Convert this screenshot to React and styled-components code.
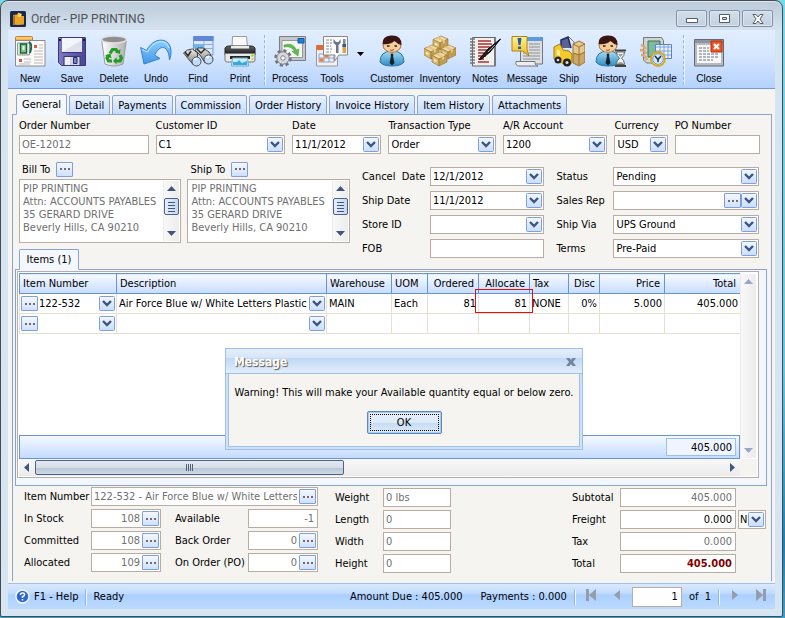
import { useId } from "react";
import styled, { createGlobalStyle, css } from "styled-components";

const GlobalStyle = createGlobalStyle`
  * {
    box-sizing: border-box;
  }
  body {
    margin: 0;
    background: linear-gradient(#74dbe8, #5ccbe0 60%, #1583b5 88%, #3a9fc4);
  }
  body, button, input, select, textarea {
    font-family: "DejaVu Sans Condensed", "Noto Sans", sans-serif;
    font-size: 11px;
    line-height: 13px;
    color: #000;
  }
  button {
    padding: 0;
    cursor: pointer;
  }
`;

const chevron = `url("data:image/svg+xml,%3Csvg xmlns='http://www.w3.org/2000/svg' width='16' height='15'%3E%3ClinearGradient id='g' x2='0' y2='1'%3E%3Cstop stop-color='%23f4f8ff'/%3E%3Cstop offset='1' stop-color='%23c8ddff'/%3E%3C/linearGradient%3E%3Crect x='.5' y='.5' width='15' height='14' rx='1' fill='url(%23g)' stroke='%237f9edb'/%3E%3Cpath d='M4 5l4 4 4-4' fill='none' stroke='%233d5483' stroke-width='2.4'/%3E%3C/svg%3E")`;

/* ---------- window ---------- */

const Window = styled.main`
  position: relative;
  min-height: calc(100vh - 1px);
  margin: 0 2px 1px 0;
  padding: 0 7px 7px;
  display: flex;
  flex-direction: column;
  border: 1px solid #464b55;
  border-radius: 8px 8px 2px 2px;
  background: linear-gradient(#bccad9, #d6e3f0 30px, #d7e4f2);
  box-shadow: inset 0 1px #dfe9f3;
`;

const TitleBar = styled.header`
  display: flex;
  align-items: center;
  gap: 5px;
  height: 29px;
  padding: 6px 2px 0;
  h1 {
    flex: 1;
    margin: 0;
    font: 12px/16px Roboto, "Open Sans", sans-serif;
    color: #4f5359;
  }
`;

const Caption = styled.div`
  display: flex;
  gap: 2px;
`;

const CaptionButton = styled.button`
  width: 31px;
  height: 17px;
  display: grid;
  place-items: center;
  border: 1px solid #8392a6;
  border-radius: 2px;
  background: linear-gradient(#d2deeb, #c2d0df);
  box-shadow: inset 0 0 0 1px #dde7f1;
`;

const Client = styled.div`
  flex: 1;
  display: flex;
  flex-direction: column;
  background: #f5f4f0;
`;

/* ---------- toolbar ---------- */

const Toolbar = styled.nav`
  display: flex;
  height: 59px;
  padding: 5px 1px 0;
  border-bottom: 1px solid #6b9be2;
  background: linear-gradient(#e2eeff, #d5e6ff 45%, #b4d2fd);
`;

const Tool = styled.button`
  width: ${({ $wide }) => ($wide ? 48 : 42)}px;
  flex: none;
  display: flex;
  flex-direction: column;
  align-items: center;
  gap: 5px;
  border: 0;
  background: none;
  font: 10px/13px "Liberation Sans", Arial, sans-serif;
  white-space: nowrap;
`;

const ToolArrow = styled.button`
  width: 15px;
  height: 34px;
  border: 0;
  background: none;
`;

const ToolDivider = styled.span`
  height: 50px;
  margin: 0 3px;
  border-left: 1px dashed #8fb5ee;
  border-right: 1px solid #eef5ff;
`;

/* ---------- tabs ---------- */

const Tabs = styled.div`
  display: flex;
  align-items: flex-end;
  gap: 2px;
  margin: 5px 0 -1px 8px;
  position: relative;
`;

const Tab = styled.button`
  height: ${({ $active }) => ($active ? 21 : 20)}px;
  padding: 0 5px;
  border: 1px solid #8ba3d0;
  border-bottom-color: ${({ $active }) => ($active ? "#f2f6fd" : "#8ba3d0")};
  border-radius: 2px 2px 0 0;
  background: ${({ $active }) =>
    $active ? "#f4f7fd" : "linear-gradient(#eaf2ff, #c5dcff)"};
  white-space: nowrap;
`;

const Panel = styled.section`
  flex: 1;
  display: flex;
  flex-direction: column;
  margin: 0 3px 2px 4px;
  padding: 0 4px 8px 2px;
  border: 1px solid #8ba3d0;
  border-bottom: 0;
  background: #f5f4f0;
`;

/* ---------- fields ---------- */

const FieldBox = styled.span`
  display: flex;
  align-items: center;
  min-width: 0;
  height: 19px;
  padding-right: 1px;
  border: 1px solid #b9ada3;
  background: #fff;
`;

const control = css`
  flex: 1;
  width: 100%;
  min-width: 0;
  height: 17px;
  border: 0;
  padding: 0 2px;
  outline: 0;
  background: transparent;
`;

const Input = styled.input`
  ${control}
  text-align: ${({ $right }) => ($right ? "right" : "left")};
  color: ${({ $muted }) => ($muted ? "#6f6f6f" : "#000")};
  ${({ $grand }) => $grand && "color: #800000; font-weight: bold;"}
`;

const Select = styled.select`
  ${control}
  appearance: none;
  padding: 0 17px 0 2px;
  background: ${chevron} no-repeat right center;
`;

const Dots = styled.button`
  flex: none;
  width: 17px;
  height: 15px;
  display: grid;
  place-items: center;
  border: 1px solid #7f9edb;
  border-radius: 1px;
  background: linear-gradient(#f4f8ff, #cfe1ff);
`;

const TopGrid = styled.div`
  display: grid;
  grid-template-columns: 129fr 129fr 89fr 107fr 104fr 53fr 85fr;
  gap: 7px;
  padding: 4px 7px 0 4px;
  label {
    display: block;
    height: 16px;
    white-space: nowrap;
  }
`;

const Middle = styled.div`
  display: flex;
  gap: 12px;
  margin-top: 7px;
  padding: 0 8px 0 4px;
`;

const Addresses = styled.div`
  flex: 330;
  display: grid;
  grid-template-columns: 1fr 1fr;
  column-gap: 6px;
  row-gap: 6px;
`;

const AddressHead = styled.div`
  display: flex;
  align-items: center;
  gap: 6px;
  height: 16px;
  margin-bottom: 2px;
  padding-left: 3px;
`;

const AddressBox = styled.div`
  display: flex;
  height: 64px;
  border: 1px solid #b9ada3;
  background: #fff;
  textarea {
    flex: 1;
    min-width: 0;
    padding: 2px 3px;
    border: 0;
    outline: 0;
    resize: none;
    overflow: hidden;
    white-space: pre;
    background: none;
    color: #6f6f6f;
  }
`;

const Scroll = styled.div`
  width: 17px;
  display: flex;
  flex-direction: column;
  align-items: center;
  justify-content: space-between;
  padding: 5px 0;
  border: 1px solid #fff;
  border-left-color: #ececec;
  background: linear-gradient(90deg, #f8f8f8, #ececec);
`;

const Thumb = styled.span`
  width: 15px;
  height: 17px;
  margin: 7px 0 auto;
  border: 1px solid #4b628f;
  border-radius: 2px;
  background: repeating-linear-gradient(#40567f 0 1px, transparent 1px 3px)
      center / 7px 10px no-repeat,
    linear-gradient(90deg, #e6eef8, #c7d9ee);
`;

const Pairs = styled.div`
  flex: ${({ $grow }) => $grow};
  display: grid;
  grid-template-columns: ${({ $label }) => $label}px 1fr;
  align-content: start;
  align-items: center;
  row-gap: 5px;
  padding-top: 6px;
  white-space: pre;
`;

/* ---------- items ---------- */

const ItemsTab = styled(Tab)`
  justify-self: start;
  width: 60px;
  position: relative;
  margin-bottom: -1px;
`;

const ItemsPanel = styled.div`
  flex: 1;
  display: flex;
  padding: 1px 7px 7px 1px;
  border: 1px solid #8ba3d0;
  background: #f2f6fd;
`;

const ItemsFrame = styled.div`
  flex: 1;
  min-width: 0;
  display: grid;
  grid-template: 1fr 17px / 1fr 17px;
  padding: 1px;
  border: 1px solid #b9ada3;
  background: #fff;
`;

const ItemsBody = styled.div`
  display: flex;
  flex-direction: column;
  min-width: 0;
`;

const Table = styled.table`
  width: 100%;
  table-layout: fixed;
  border-collapse: collapse;
  th,
  td {
    height: 20px;
    padding: 0 2px;
    border: 1px solid #e4e0d2;
    text-align: left;
    white-space: nowrap;
  }
  th {
    padding: 0 4px 0 3px;
    border-color: #6a93d4;
    font-weight: normal;
    background: linear-gradient(#f8fbff, #dfebff 50%, #c6dcff);
  }
  td {
    position: relative;
  }
  td:has(button) {
    padding: 0 1px;
  }
  .num {
    text-align: right;
  }
`;

const Cell = styled.div`
  display: flex;
  align-items: center;
  input {
    flex: 1;
    min-width: 0;
    width: 100%;
    padding: 0 0 0 1px;
    border: 0;
    outline: 0;
    background: none;
  }
`;

const CellArrow = styled.button`
  flex: none;
  width: 16px;
  height: 15px;
  border: 0;
  background: ${chevron} no-repeat;
`;

const Highlight = styled.span`
  position: absolute;
  inset: -5px -4px 0;
  border: 1px solid #e01010;
  pointer-events: none;
`;

const TotalsBand = styled.div`
  display: flex;
  justify-content: flex-end;
  margin-top: auto;
  height: 24px;
  padding: 2px 3px;
  border: 1px solid #6a93d4;
  background: linear-gradient(#f4f9ff, #c4dbff);
  output {
    width: 70px;
    padding: 2px 3px;
    border: 1px solid #9cbdf0;
    background: #eef5ff;
    text-align: right;
  }
`;

const BottomScroll = styled.div`
  display: flex;
  align-items: center;
  gap: 6px;
  padding: 1px 5px;
  background: linear-gradient(#f8f8f8, #ebebeb);
`;

const WideThumb = styled.span`
  width: 309px;
  height: 15px;
  margin-right: auto;
  border: 1px solid #4b628f;
  border-radius: 2px;
  background: repeating-linear-gradient(90deg, #50607c 0 1px, transparent 1px 2px)
      center / 7px 7px no-repeat,
    linear-gradient(#e3e9f0, #d5dde6 50%, #b9c6d5 55%, #cfdae6);
`;

const Corner = styled.span`
  background: #f5f4f0;
`;

/* ---------- item details ---------- */

const Details = styled.div`
  display: flex;
  align-items: flex-start;
  gap: 17px;
  padding: 1px 1px 0 9px;
`;

const DetailGrid = styled.div`
  display: grid;
  grid-template-columns: ${({ $cols }) => $cols};
  grid-auto-rows: 19px;
  align-items: center;
  row-gap: 3px;
  margin-top: ${({ $top = 0 }) => $top}px;
  margin-left: ${({ $end }) => ($end ? "auto" : 0)};
  white-space: nowrap;
  .wide {
    grid-column: 2 / -1;
  }
  .second {
    padding-left: 14px;
  }
`;

const FreightCode = styled(FieldBox)`
  margin-left: 2px;
  select {
    padding-left: 1px;
  }
`;

/* ---------- status bar ---------- */

const StatusBar = styled.footer`
  display: flex;
  align-items: center;
  height: 26px;
  padding: 0 1px 0 7px;
  border-top: 1px solid #9cc2f3;
  background: linear-gradient(#dbe9ff, #c3dcff 35%, #abd0ff 45%, #bddaff);
  a {
    display: flex;
    align-items: center;
    gap: 4px;
    color: #000;
    text-decoration: none;
  }
`;

const StatusDivider = styled.span`
  width: 2px;
  height: 16px;
  margin: 0 ${({ $tight }) => ($tight ? 2 : 6)}px 0 7px;
  border-left: 1px solid #8db5ec;
  border-right: 1px solid #f4f9ff;
`;

const StatusText = styled.span`
  margin-left: ${({ $push }) => ($push ? "auto" : 0)};
  margin-right: ${({ $gap = 0 }) => $gap}px;
  white-space: pre;
`;

const PagerButton = styled.button`
  width: 26px;
  height: 16px;
  border: 0;
  background: none;
`;

const PageInput = styled.input`
  width: 50px;
  height: 20px;
  margin: 0 7px 0 2px;
  padding: 0 3px;
  border: 1px solid #b9ada3;
  text-align: right;
`;

/* ---------- message ---------- */

const Message = styled.section`
  position: absolute;
  left: 224px;
  top: 347px;
  width: 358px;
  border: 1px solid #9fc0ee;
  background: #cfe1f8;
  padding: 0 2px 2px;
`;

const MessageHead = styled.div`
  display: flex;
  align-items: center;
  justify-content: space-between;
  height: 25px;
  margin: 0 -2px;
  padding: 2px 6px 0 8px;
  border-bottom: 1px solid #9fc0ee;
  background: linear-gradient(#e6eefa, #d6e5f9 35%, #c1d8f6 40%, #e2eefc);
  h2 {
    margin: 0;
    font-size: 12px;
    line-height: 16px;
    color: #fff;
    text-shadow: 1px 1px 1px #5d5346;
  }
  button {
    border: 0;
    background: none;
    line-height: 0;
  }
`;

const MessageBody = styled.div`
  display: flex;
  flex-direction: column;
  align-items: center;
  gap: 12px;
  padding: 12px 0;
  border: 1px solid #9fc0ee;
  border-top: 0;
  background: #f5f4f0;
  p {
    margin: 0;
    white-space: nowrap;
  }
`;

const OkButton = styled.button`
  width: 75px;
  height: 23px;
  border: 1px solid #5f86b9;
  border-radius: 2px;
  background: linear-gradient(#e9f1fb, #dce9f8 50%, #c7dbf2 52%, #dcebfa);
  box-shadow: inset 0 0 0 1px #a5cdf2;
  outline: 1px dotted #000;
  outline-offset: -4px;
`;

/* ---------- drawings ---------- */

const Svg = ({ size = 32, children }) => (
  <svg width={size} height={size} viewBox="0 0 32 32" aria-hidden="true">
    {children}
  </svg>
);

const Fade = ({ id, from, to, across }) => (
  <linearGradient id={id} x1="0" y1="0" x2={across ? 1 : 0} y2={across ? 0 : 1}>
    <stop stopColor={from} />
    <stop offset="1" stopColor={to} />
  </linearGradient>
);

const NewIcon = () => (
  <Svg>
    <path d="M1.500 8V2.500q0-1 1-1h15q1 0 1 1V8z" fill="#f0b04a" stroke="#c0842a" />
    <path d="M2 3h16" stroke="#ffdf9c" />
    <path d="M1.500 5.500H31V31H1.500z" fill="#fbfbfb" stroke="#8a8a8a" />
    <path d="M3.500 8h12v12h-12z" fill="#e2e8e4" stroke="#8c9a92" />
    <path d="M6.500 9h6v9h-6z" fill="#7cc88f" stroke="#1f5f35" strokeWidth="1.400" />
    <path d="M8.500 11h2v4h-2z" fill="#e2f7e6" />
    <path d="M15 7q4 2 1 11" fill="none" stroke="#1e6558" strokeWidth="2" />
    <path d="M20 10h3v3h-3zM5 24h3v3H5z" fill="#d9603c" />
    <path d="M25 10h4M25 13h4M20 16h9M20 19h9M20 22h9M10 24h7M10 27h7M5 29h11M20 25h9M20 28h9" stroke="#bdb9b6" />
  </Svg>
);

const SaveIcon = () => (
  <Svg>
    <Fade id="save" from="#7d79c4" to="#4b4597" across />
    <path d="M2.500 3q0-.5.500-.5h26q.5 0 .5.5v27.500H5.500l-3-3z" fill="url(#save)" stroke="#3a3878" />
    <path d="M6 3h20v14H6z" fill="#f4f5f8" />
    <path d="M6 17 26 5v12z" fill="#dfe1ea" />
    <path d="M6 17.500h20" stroke="#38357c" />
    <path d="M8 21.500h16v9H8z" fill="#d3d4e2" stroke="#39376f" />
    <path d="M9 22h5v8H9z" fill="#f0f0f6" />
    <path d="M17.500 22.500h3.500v6h-3.500z" fill="#6e83c8" stroke="#2c2b62" />
    <path d="M3 4h2v2H3zM27 4h2v2h-2z" fill="#1c1a44" />
  </Svg>
);

const DeleteIcon = () => (
  <Svg>
    <Fade id="bin" from="#ffffff" to="#b0b0b0" across />
    <path d="M3.500 4 7 29q9 4 18 0l3.500-25z" fill="url(#bin)" stroke="#9b9b9b" />
    <ellipse cx="16" cy="4.500" rx="12.500" ry="3.500" fill="#8f8f8f" stroke="#e2e2e2" strokeWidth="1.500" />
    <g fill="none" stroke="#249b27" strokeWidth="3.200">
      <path d="m12 18.500 2.500-4h3.500l1.500 2.500" />
      <path d="m22 20 1.500 3-1.500 3h-4" />
      <path d="M14 26h-3.500L9 23l1.500-3" />
    </g>
    <path d="m22.500 14-.5 5-5-1.500zM18.500 22v7.500L15 26zM7 20.500l5.500-2 1 5z" fill="#249b27" />
  </Svg>
);

const UndoIcon = () => (
  <Svg>
    <Fade id="undo" from="#8fd0fb" to="#3f97ea" />
    <path
      d="M.7 12.500 6.500 15.500C11 7 18 4 24 5.500q6.500 2 7 10.500.3 5-1.500 9-.5-9-4.500-12-5-3-10.500 7l5.500 3.500L4 29z"
      fill="url(#undo)"
      stroke="#3482d2"
    />
    <path d="M2 14.500 7.500 17C12 8.500 18 5.500 24 7q4 1.500 5 6" fill="none" stroke="#c9e9ff" />
  </Svg>
);

const FindIcon = () => (
  <Svg>
    <Fade id="bino" from="#e9e9e6" to="#7d7d7a" />
    <path d="M11.500 1.500H31V20H11.500z" fill="#d9e8ff" stroke="#7799d8" />
    <path d="M11.500 1h20v5h-20z" fill="#5e87dc" />
    <path d="M12 9.500h19M12 13.500h19M22 6v14" stroke="#8cacdf" />
    <path d="M12 10h10v3H12z" fill="#66b8ef" />
    <path d="m1.500 18 4-3 5-1 5 4v7l-4 5z" fill="url(#bino)" stroke="#444" />
    <path d="m13 15 3-2h5l6 4 4 7-8 4-5-8z" fill="url(#bino)" stroke="#444" />
    <path d="m3 17 3 4 3-5M15 14l4 4 4-4" fill="none" stroke="#2b2b2b" strokeWidth="1.500" />
    <ellipse cx="14.500" cy="26.500" rx="4.500" ry="4.500" fill="#bfdcfa" stroke="#4c4c4c" />
    <ellipse cx="26.500" cy="24.500" rx="4.500" ry="4.500" fill="#bfdcfa" stroke="#4c4c4c" />
    <path d="M12.500 25q1-2 3-1.500M24.500 23q1-2 3-1.500" fill="none" stroke="#fff" strokeWidth="1.500" />
  </Svg>
);

const PrintIcon = () => (
  <Svg>
    <Fade id="printer" from="#666" to="#151515" />
    <path d="M8.500 1.500h14l1 11H8z" fill="#fafafa" stroke="#9b9b9b" />
    <path d="M1 13q1-2 4-2h22q3 0 4 2v7H1z" fill="url(#printer)" stroke="#222" />
    <path d="M7 11h18v2.500H7z" fill="#ececec" />
    <path d="M1 18.500h30V25q0 2-2 2H3q-2 0-2-2z" fill="#e8e8e8" stroke="#7b7b7b" />
    <path d="M6 21h20v3H6z" fill="#252525" />
    <path d="M8.500 23h15l1 8h-17z" fill="#c9ebfa" stroke="#68a8c8" />
    <path d="M9 27h4l2-2 3 3 5-2v4H9z" fill="#3aa9d8" />
    <circle cx="28.500" cy="20.500" r="1.200" fill="#8de01c" />
    <circle cx="28.500" cy="24" r="1" fill="#e8c020" />
  </Svg>
);

const Gear = () => (
  <>
    <circle cx="9" cy="23" r="7" fill="none" stroke="#6f747b" strokeWidth="3.500" strokeDasharray="3 2.500" />
    <circle cx="9" cy="23" r="6.200" fill="#d6d8db" stroke="#7c8189" />
    <circle cx="9" cy="23" r="2.200" fill="#fff" stroke="#7c8189" />
  </>
);

const ProcessIcon = () => (
  <Svg>
    <path d="M5.500 1.500h26v24h-26z" fill="#c3c7c9" stroke="#7b7f83" />
    <path d="M8 5.500h20.500v17H8z" fill="#f3f6f3" stroke="#999" />
    <path d="M24 3.500h6V8h-6z" fill="#1f7fe0" stroke="#1458a4" />
    <path d="M10 10q9-3 12.500 5l2.500-1-1 7-6-4.500 2.500-.5Q17 10.500 10 12z" fill="#5dbb50" stroke="#3d9a36" strokeWidth=".5" />
    <Gear />
  </Svg>
);

const ToolsIcon = () => (
  <Svg>
    <path d="M.5 10.500h21V31H.5z" fill="#f1f1f4" stroke="#999" />
    <path d="M.5 10h8v5h-8z" fill="#e9682e" />
    <path d="M3 19h15M3 23h15M3 27h15M3 19v8M8 19v8M13 19v8M18 19v8" stroke="#8fa0cc" />
    <path d="M8.500 19.500h4v3h-4zM3.500 23.500h4v3h-4z" fill="#ed7c42" />
    <path d="M7.500 1.500H31.500v18.500H23l-4.500 6 .5-6H7.500z" fill="#fbfbfb" stroke="#888" />
    <path d="M10 5h6M10 8h6M10 11h5M10 14h6M10 17h5" stroke="#8a8a8a" strokeDasharray="3 1" />
    <path d="M17.500 4v4l2.500 2v8h2.500v-8l2-2V4l-2 3H20z" fill="#6b7489" />
    <path d="M27 4h2.500v6H27z" fill="#7c88a0" />
    <path d="M26.500 9h3.500v9h-3.500z" fill="#e0a04a" />
    <path d="M26.500 9h3.500v3h-3.500z" fill="#315aa0" />
  </Svg>
);

const Person = ({ id, small }) => (
  <g transform={small ? "translate(-3 0)" : undefined}>
    <Fade id={id} from="#a3dcf4" to="#318dc2" />
    <path d="M4 27q0-11 12-11t12 11q-3 4-12 4T4 27z" fill={`url(#${id})`} stroke="#2675a5" />
    <path d="m12 17 4 3 4-3-2-2h-4z" fill="#fff" />
    <path d="m14.500 18.500h3L17 21l1.500 7-2.500 2.500-2.500-2.500L15 21z" fill="#19202e" />
    <ellipse cx="16" cy="10" rx="9" ry="7.500" fill="#f5cd9c" stroke="#a36f3f" />
    <path d="M6.500 9Q6 1 15 .5 26 0 25.500 10q-4-1-7-4-5 4-12 3z" fill="#3b1512" />
    <path d="M11 11h2.500M18.500 11H21" stroke="#321" strokeWidth="1.500" />
    <path d="M14 15q2 1 4-.5" fill="none" stroke="#9c4f2c" />
  </g>
);

const CustomerIcon = () => (
  <Svg>
    <Person id="customer" />
  </Svg>
);

const Crate = ({ x, y }) => (
  <g transform={`translate(${x} ${y})`} stroke="#977331" strokeWidth=".6">
    <path d="M0 3.500 8 0l7 3-8 4z" fill="#f0dba6" />
    <path d="M0 3.500 7 7v7l-7-4z" fill="#d6b86f" />
    <path d="m7 7 8-4v7l-8 4z" fill="#c29c51" />
    <path d="m3 2.200 7 3.300v2.500l2-1V4.500L5.500 1z" fill="#e3c482" stroke="none" />
    <path d="m2 7 2.500 1v2L2 9z" fill="#fff0c7" stroke="none" />
  </g>
);

const InventoryIcon = () => (
  <Svg>
    <Crate x={9} y={1} />
    <Crate x={0} y={10} />
    <Crate x={17} y={10} />
    <Crate x={8} y={17} />
  </Svg>
);

const NotesIcon = () => (
  <Svg>
    <path d="M3.500 2.500h23V31h-23z" fill="#f3efee" stroke="#666" />
    <path d="M25 3h2v28h-2z" fill="#77797c" />
    <path d="M9 6h13M9 9h14M9 12h12M9 15h11M9 18h9M9 21h8M9 24h6M9 27h11" stroke="#a63434" strokeWidth="1.300" />
    <path d="M1 4h5M1 7h5M1 10h5M1 13h5M1 16h5M1 19h5M1 22h5M1 25h5M1 28h5" stroke="#777" strokeWidth="1.400" />
    <path d="M31.500 4 21 17 12.500 24l-2 .5 1-2L19 14z" fill="#222" stroke="#000" />
    <path d="m19 17 7-7" stroke="#aaa" />
  </Svg>
);

const MessageIcon = () => (
  <Svg>
    <Fade id="note" from="#fff38a" to="#f0bd23" />
    <path d="M9.500 2.500h22V29h-22z" fill="#dcdfe2" stroke="#777" />
    <path d="M14 2h17.500v4H14z" fill="#5c9ae2" />
    <path d="M18 9h11M18 12h11M18 15h11M12 18h17M12 21h17M12 24h17" stroke="#8b9095" />
    <path d="M5 26.500h19q0 4.500 3 4.500H8q-4 0-3-4.500z" fill="#eee" stroke="#777" />
    <path d="M1 1.500h15V15l2 6-6-5H1z" fill="url(#note)" stroke="#af8414" />
    <path d="M6.500 3h4l-1 7h-2zM7 11.500h3V14H7z" fill="#255ab3" />
  </Svg>
);

const ShipIcon = () => (
  <Svg>
    <path d="M8 13V5l7-3 3 11" fill="#5a6196" stroke="#222a55" strokeWidth="1.500" />
    <path d="M16 2l5 5v20h11" fill="none" stroke="#777" />
    <path d="m1 12 6-3 3 6 6 1 3 3v9l-8 1L1 24z" fill="#f4ca2d" stroke="#a27b13" />
    <path d="m4 14 3 2v5l-3-1z" fill="#fdf09b" />
    <path d="m20 9 6-3 6 3v8l-6 3-6-2z" fill="#e6c88b" stroke="#987239" />
    <path d="m20 18 6 2 6-3v10l-6 4-6-3z" fill="#cda765" stroke="#987239" />
    <path d="M26 12v18M20 9l6 3 6-3" fill="none" stroke="#987239" />
    <circle cx="5" cy="25" r="3.500" fill="#222" />
    <circle cx="5" cy="25" r="1.300" fill="#ddd" />
    <circle cx="14" cy="27.500" r="4" fill="#222" />
    <circle cx="14" cy="27.500" r="1.500" fill="#ddd" />
  </Svg>
);

const HistoryIcon = () => (
  <Svg>
    <Person id="history" small />
    <path d="M20 15.500h11M20 31h11" stroke="#47403b" strokeWidth="2" />
    <path d="M21.500 17h8q0 4-3 6.200 3 2 3 6.300h-8q0-4 3-6.300-3-2.200-3-6.200z" fill="#eef8fb" stroke="#5c6668" />
    <path d="M23 19h5l-2.500 3zM22 29q3.500-4 7 0z" fill="#a59581" />
  </Svg>
);

const ScheduleIcon = () => (
  <Svg>
    <path d="M3.500 2.500h18l2 3V28h-17l-3-3z" fill="#d2d4d1" stroke="#777" />
    <path d="M8 6h12v16H8z" fill="#7dbb9c" stroke="#3d6f57" />
    <path d="M1 10q4 1 4 4M0 15q5 0 6 4M1 20q4 0 6 5" stroke="#d9a875" strokeWidth="2.500" fill="none" />
    <path d="M15.500 9.500h16v14h-16z" fill="#eef4ff" stroke="#5c83c9" />
    <path d="M16 12h15M16 16h15M16 20h15M20 10v13M24 10v13M28 10v13" stroke="#7ca0df" />
    <circle cx="18" cy="24" r="7" fill="#f0f5fa" stroke="#d9a914" strokeWidth="1.800" />
    <circle cx="18" cy="24" r="5.300" fill="#d5e8f8" stroke="#3d6aa1" strokeWidth=".7" />
    <path d="m15 21 3 3.500 3-3.500M18 24.500V27" fill="none" stroke="#1b2b4b" strokeWidth="1.500" />
  </Svg>
);

const CloseIcon = () => (
  <Svg>
    <path d="M1.500 4.500h29V31h-29z" fill="#b7bac0" stroke="#65686e" />
    <path d="M2 5h28v3H2z" fill="#90959d" />
    <path d="M4 10h24v18H4z" fill="#f7f7f7" />
    <path d="M6 13h10M6 16h10M6 19h20M6 22h20M6 25h14" stroke="#6b7485" strokeDasharray="3 1" />
    <path d="M18 6h11v11H18z" fill="#ee5322" stroke="#b72c10" />
    <path d="m21 9 5 5m0-5-5 5" stroke="#fff" strokeWidth="2.200" />
  </Svg>
);

const AppLogo = () => (
  <Svg size={16}>
    <rect width="32" height="32" rx="3" fill="#17294c" />
    <path d="M6 8l8-1 3-4 7 3-2 4h6v17l-12 1-10-1z" fill="#e7a428" />
    <path d="m17 4 6 3-1 5-7-1z" fill="#ffd768" />
    <path d="M6 9h4v19H6z" fill="#b97614" />
  </Svg>
);

const Triangle = ({ dir, color = "#40557f" }) => {
  const shapes = {
    up: ["M0 5 4.500 0 9 5z", 9, 5],
    down: ["M0 0h9L4.500 5z", 9, 5],
    left: ["M5 0v9L0 4.500z", 5, 9],
    right: ["M0 0v9l5-4.500z", 5, 9],
  };
  const [d, w, h] = shapes[dir];
  return (
    <svg width={w} height={h} aria-hidden="true">
      <path d={d} fill={color} />
    </svg>
  );
};

const PagerIcon = ({ d }) => (
  <svg width="12" height="12" aria-hidden="true">
    <path d={d} fill="#939dac" />
  </svg>
);

const DotsButton = ({ label }) => (
  <Dots type="button" aria-label={label}>
    <svg width="10" height="2" aria-hidden="true">
      <path d="M0 0h2v2H0zM4 0h2v2H4zM8 0h2v2H8z" fill="#7a6a62" />
    </svg>
  </Dots>
);

/* ---------- parts ---------- */

function Field({ label, value = "", select, dots, className, labelClass, ...rest }) {
  const id = useId();
  return (
    <>
      <label htmlFor={id} className={labelClass}>
        {label}
      </label>
      <FieldBox className={className}>
        {dots && select && <Input aria-label={`${label} code`} />}
        {select && !dots && (
          <Select id={id} defaultValue={value}>
            <option>{value}</option>
          </Select>
        )}
        {!select && <Input id={id} defaultValue={value} {...rest} />}
        {dots && <DotsButton label={`Look up ${label}`} />}
        {dots && select && <CellArrow id={id} type="button" aria-label={`Open ${label}`} />}
      </FieldBox>
    </>
  );
}

const address = "PIP PRINTING\nAttn: ACCOUNTS PAYABLES\n35 GERARD DRIVE\nBeverly Hills, CA 90210";

function Address({ label }) {
  const id = useId();
  return (
    <div>
      <AddressHead>
        <label htmlFor={id}>{label}</label>
        <DotsButton label={`Look up ${label}`} />
      </AddressHead>
      <AddressBox>
        <textarea id={id} readOnly defaultValue={address} />
        <Scroll>
          <Triangle dir="up" />
          <Thumb />
          <Triangle dir="down" />
        </Scroll>
      </AddressBox>
    </div>
  );
}

const tools = [
  ["New", NewIcon],
  ["Save", SaveIcon],
  ["Delete", DeleteIcon],
  ["Undo", UndoIcon],
  ["Find", FindIcon],
  ["Print", PrintIcon],
  null,
  ["Process", ProcessIcon],
  ["Tools", ToolsIcon, "menu"],
  ["Customer", CustomerIcon, "wide"],
  ["Inventory", InventoryIcon, "wide"],
  ["Notes", NotesIcon],
  ["Message", MessageIcon],
  ["Ship", ShipIcon],
  ["History", HistoryIcon],
  ["Schedule", ScheduleIcon, "wide"],
  null,
  ["Close", CloseIcon],
];

const tabs = [
  "General",
  "Detail",
  "Payments",
  "Commission",
  "Order History",
  "Invoice History",
  "Item History",
  "Attachments",
];

const columns = [
  ["Item Number", 97],
  ["Description", 210],
  ["Warehouse", 65],
  ["UOM", 36],
  ["Ordered", 51, true],
  ["Allocate", 51, true],
  ["Tax", 39],
  ["Disc", 31, true],
  ["Price", 65, true],
  ["Total", 76, true],
];

const rows = [
  ["122-532", "Air Force Blue w/ White Letters Plastic", "MAIN", "Each", "81", "81", "NONE", "0%", "5.000", "405.000"],
  ["", "", "", "", "", "", "", "", "", ""],
];

function ItemsTable() {
  return (
    <Table>
      <colgroup>
        {columns.map(([name, width]) => (
          <col key={name} style={{ width }} />
        ))}
      </colgroup>
      <thead>
        <tr>
          {columns.map(([name, , num]) => (
            <th key={name} className={num && "num"}>
              {name}
            </th>
          ))}
        </tr>
      </thead>
      <tbody>
        {rows.map((row, r) => (
          <tr key={r}>
            {row.map((value, c) => (
              <td key={c} className={columns[c][2] && "num"}>
                {c < 2 ? (
                  <Cell>
                    {c === 0 && <DotsButton label="Look up item" />}
                    <input aria-label={columns[c][0]} defaultValue={value} />
                    <CellArrow type="button" aria-label={`Open ${columns[c][0]}`} />
                  </Cell>
                ) : (
                  value
                )}
                {columns[c][0] === "Allocate" && value && <Highlight />}
              </td>
            ))}
          </tr>
        ))}
      </tbody>
    </Table>
  );
}

export default function App() {
  return (
    <>
      <GlobalStyle />
      <Window>
        <TitleBar>
          <AppLogo />
          <h1>Order - PIP PRINTING</h1>
          <Caption>
            <CaptionButton aria-label="Minimize">
              <svg width="12" height="9">
                <path d="M.5 4.500h11v4H.5z" fill="#fff" stroke="#555d6c" />
              </svg>
            </CaptionButton>
            <CaptionButton aria-label="Maximize">
              <svg width="11" height="9">
                <path d="M.5.5h10v8H.5zM3.500 3.500v2h4v-2z" fill="#fff" fillRule="evenodd" stroke="#555d6c" />
              </svg>
            </CaptionButton>
            <CaptionButton aria-label="Close window">
              <svg width="12" height="10">
                <path d="M1 .5h3l2 2.500L8 .5h3L8 5l3 4.500H8L6 7 4 9.500H1L4 5z" fill="#fff" stroke="#555d6c" />
              </svg>
            </CaptionButton>
          </Caption>
        </TitleBar>

        <Client>
          <Toolbar>
            {tools.map((tool, i) => {
              if (!tool) return <ToolDivider key={i} />;
              const [name, Icon, kind] = tool;
              return [
                <Tool key={name} $wide={kind === "wide"}>
                  <Icon />
                  {name}
                </Tool>,
                kind === "menu" && (
                  <ToolArrow key="menu" aria-label="More tools">
                    <svg width="7" height="4">
                      <path d="M0 0h7L3.500 4z" />
                    </svg>
                  </ToolArrow>
                ),
              ];
            })}
          </Toolbar>

          <Tabs>
            {tabs.map((tab, i) => (
              <Tab key={tab} $active={i === 0}>
                {tab}
              </Tab>
            ))}
          </Tabs>

          <Panel>
            <TopGrid>
              <div>
                <Field label="Order Number" value="OE-12012" $muted />
              </div>
              <div>
                <Field label="Customer ID" value="C1" select />
              </div>
              <div>
                <Field label="Date" value="11/1/2012" select />
              </div>
              <div>
                <Field label="Transaction Type" value="Order" select />
              </div>
              <div>
                <Field label="A/R Account" value="1200" select />
              </div>
              <div>
                <Field label="Currency" value="USD" select />
              </div>
              <div>
                <Field label="PO Number" />
              </div>
            </TopGrid>

            <Middle>
              <Addresses>
                <Address label="Bill To" />
                <Address label="Ship To" />
                <ItemsTab $active>Items (1)</ItemsTab>
              </Addresses>
              <Pairs $grow={182} $label={68}>
                <Field label="Cancel  Date" value="12/1/2012" select />
                <Field label="Ship Date" value="11/1/2012" select />
                <Field label="Store ID" select />
                <Field label="FOB" />
              </Pairs>
              <Pairs $grow={202} $label={57}>
                <Field label="Status" value="Pending" select />
                <Field label="Sales Rep" select dots />
                <Field label="Ship Via" value="UPS Ground" select />
                <Field label="Terms" value="Pre-Paid" select />
              </Pairs>
            </Middle>

            <ItemsPanel>
              <ItemsFrame>
                <ItemsBody>
                  <ItemsTable />
                  <TotalsBand>
                    <output>405.000</output>
                  </TotalsBand>
                </ItemsBody>
                <Scroll>
                  <Triangle dir="up" color="#9aa6c8" />
                  <Triangle dir="down" color="#9aa6c8" />
                </Scroll>
                <BottomScroll>
                  <Triangle dir="left" />
                  <WideThumb />
                  <Triangle dir="right" />
                </BottomScroll>
                <Corner />
              </ItemsFrame>
            </ItemsPanel>

            <Details>
              <DetailGrid $cols="67px 70px 87px 70px">
                <Field
                  label="Item Number"
                  value="122-532 - Air Force Blue w/ White Letters Plastic"
                  className="wide"
                  dots
                  $muted
                />
                <Field label="In Stock" value="108" dots $muted $right />
                <Field label="Available" value="-1" labelClass="second" $muted $right />
                <Field label="Committed" value="108" dots $muted $right />
                <Field label="Back Order" value="0" labelClass="second" dots $muted $right />
                <Field label="Allocated" value="109" dots $muted $right />
                <Field label="On Order (PO)" value="0" labelClass="second" dots $muted $right />
              </DetailGrid>
              <DetailGrid $cols="48px 68px" $top={1}>
                <Field label="Weight" value="0 lbs" $muted />
                <Field label="Length" value="0" $muted />
                <Field label="Width" value="0" $muted />
                <Field label="Height" value="0" $muted />
              </DetailGrid>
              <DetailGrid $cols="48px 116px 30px" $top={1} $end>
                <Field label="Subtotal" value="405.000" $muted $right />
                <span />
                <Field label="Freight" value="0.000" $right />
                <FreightCode>
                  <Select aria-label="Freight tax code">
                    <option>N</option>
                  </Select>
                </FreightCode>
                <Field label="Tax" value="0.000" $muted $right />
                <span />
                <Field label="Total" value="405.000" $right $grand />
              </DetailGrid>
            </Details>
          </Panel>

          <StatusBar>
            <a href="#help">
              <svg width="15" height="15" viewBox="0 0 15 15" aria-hidden="true">
                <circle cx="7.500" cy="7.500" r="6.500" fill="#2f67d0" stroke="#f2f7ff" strokeWidth="1.500" />
                <path d="M5.500 6q0-2 2-2t2 1.700q0 1.300-2 2V9M7.500 10v1.500" fill="none" stroke="#fff" strokeWidth="1.500" />
              </svg>
              F1 - Help
            </a>
            <StatusDivider />
            Ready
            <StatusText $push $gap={18}>
              Amount Due : 405.000
            </StatusText>
            <StatusText>Payments : 0.000</StatusText>
            <StatusDivider $tight />
            <PagerButton aria-label="First">
              <PagerIcon d="M1 0h3v12H1zM11 0v12L4 6z" />
            </PagerButton>
            <PagerButton aria-label="Previous">
              <PagerIcon d="M9 1v10L3 6z" />
            </PagerButton>
            <PageInput aria-label="Page" defaultValue="1" />
            <span>of&nbsp; 1</span>
            <StatusDivider $tight />
            <PagerButton aria-label="Next">
              <PagerIcon d="M3 1v10l6-5z" />
            </PagerButton>
            <PagerButton aria-label="Last">
              <PagerIcon d="M1 0v12l7-6zM8 0h3v12H8z" />
            </PagerButton>
          </StatusBar>
        </Client>

        <Message role="dialog" aria-label="Message">
          <MessageHead>
            <h2>Message</h2>
            <button aria-label="Dismiss">
              <svg width="10" height="8">
                <path d="M0 0h3.500L5 2 6.500 0H10L7 4l3 4H6.500L5 6 3.500 8H0l3-4z" fill="#73849c" />
              </svg>
            </button>
          </MessageHead>
          <MessageBody>
            <p>Warning! This will make your Available quantity equal or below zero.</p>
            <OkButton>OK</OkButton>
          </MessageBody>
        </Message>
      </Window>
    </>
  );
}
